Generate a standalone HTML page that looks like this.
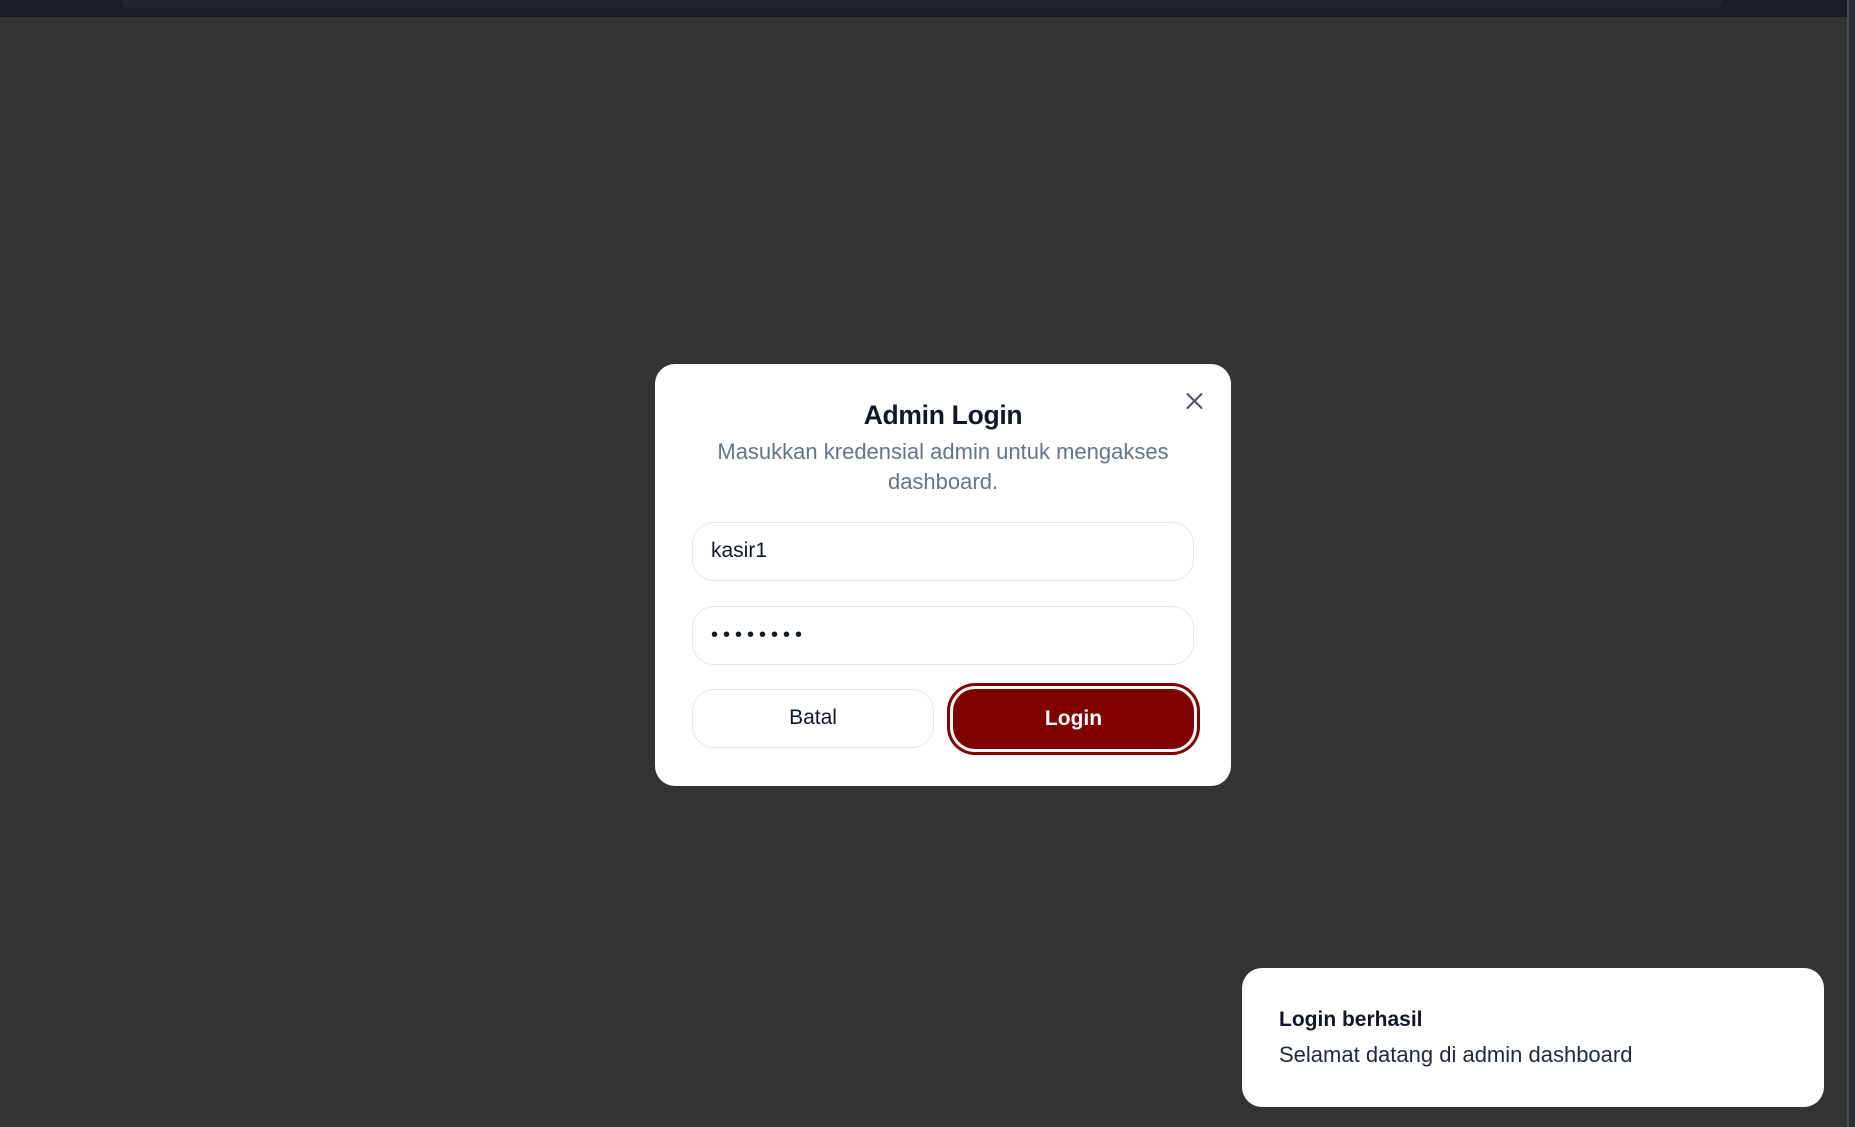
<!DOCTYPE html>
<html><head><meta charset="utf-8"><style>
*{box-sizing:border-box;margin:0;padding:0}
html,body{width:1855px;height:1127px;overflow:hidden;background:#333333;font-family:"Liberation Sans",sans-serif;position:relative}
.top{position:absolute;left:0;top:0;width:1847px;height:17px;background:#1b1e27}
.top .in{position:absolute;left:121px;top:0;width:1601px;height:8px;background:#232732;border-radius:0 0 6px 6px}
.sb{position:absolute;left:1847px;top:0;width:8px;height:1127px;background:#2a2d35;border-left:2px solid #4a4d55}
.modal{position:absolute;left:655px;top:364px;width:576px;height:422px;background:#fff;border-radius:20px}
.title{position:absolute;left:655px;width:576px;top:398px;line-height:34px;text-align:center;font-weight:bold;font-size:26.5px;color:#0f172a;letter-spacing:-0.3px}
.sub{position:absolute;left:690px;width:506px;top:437px;text-align:center;font-size:22px;line-height:30px;color:#64748b}
.inp{position:absolute;left:692px;width:502px;height:59px;border:1.5px solid #e2e8f0;border-radius:22px;background:#fff;font-size:21px;color:#0f172a;padding-left:18px;line-height:56px}
.btn{position:absolute;border-radius:22px;text-align:center;font-size:21px}
.batal{left:692px;top:689px;width:242px;height:59px;border:1.5px solid #e2e8f0;color:#0f172a;line-height:56px}
.login{left:953px;top:689px;width:241px;height:60px;background:#800000;color:#fff;font-weight:bold;box-shadow:0 0 0 3px #fff,0 0 0 6px #800000;line-height:60px}
.toast{position:absolute;left:1242px;top:968px;width:582px;height:139px;background:#fff;border-radius:20px}
.t1{position:absolute;left:1279px;top:1008px;font-weight:bold;font-size:21px;color:#0f172a}
.t2{position:absolute;left:1279px;top:1042px;font-size:22px;color:#1e293b}
</style></head><body>
<div class="top"><div class="in"></div></div>
<div class="sb"></div>
<div class="modal"></div>
<div class="title">Admin Login</div>
<div class="sub">Masukkan kredensial admin untuk mengakses dashboard.</div>
<svg style="position:absolute;left:1185px;top:392px" width="19" height="18" viewBox="0 0 19 18"><path d="M2.5 2 L16.5 16 M16.5 2 L2.5 16" stroke="#4b5060" stroke-width="2" stroke-linecap="round"/></svg>
<div class="inp" style="top:522px">kasir1</div>
<div class="inp" style="top:606px;font-size:20px;letter-spacing:5px">••••••••</div>
<div class="btn batal">Batal</div>
<div class="btn login">Login</div>
<div class="toast"></div>
<div class="t1">Login berhasil</div>
<div class="t2">Selamat datang di admin dashboard</div>
</body></html>
